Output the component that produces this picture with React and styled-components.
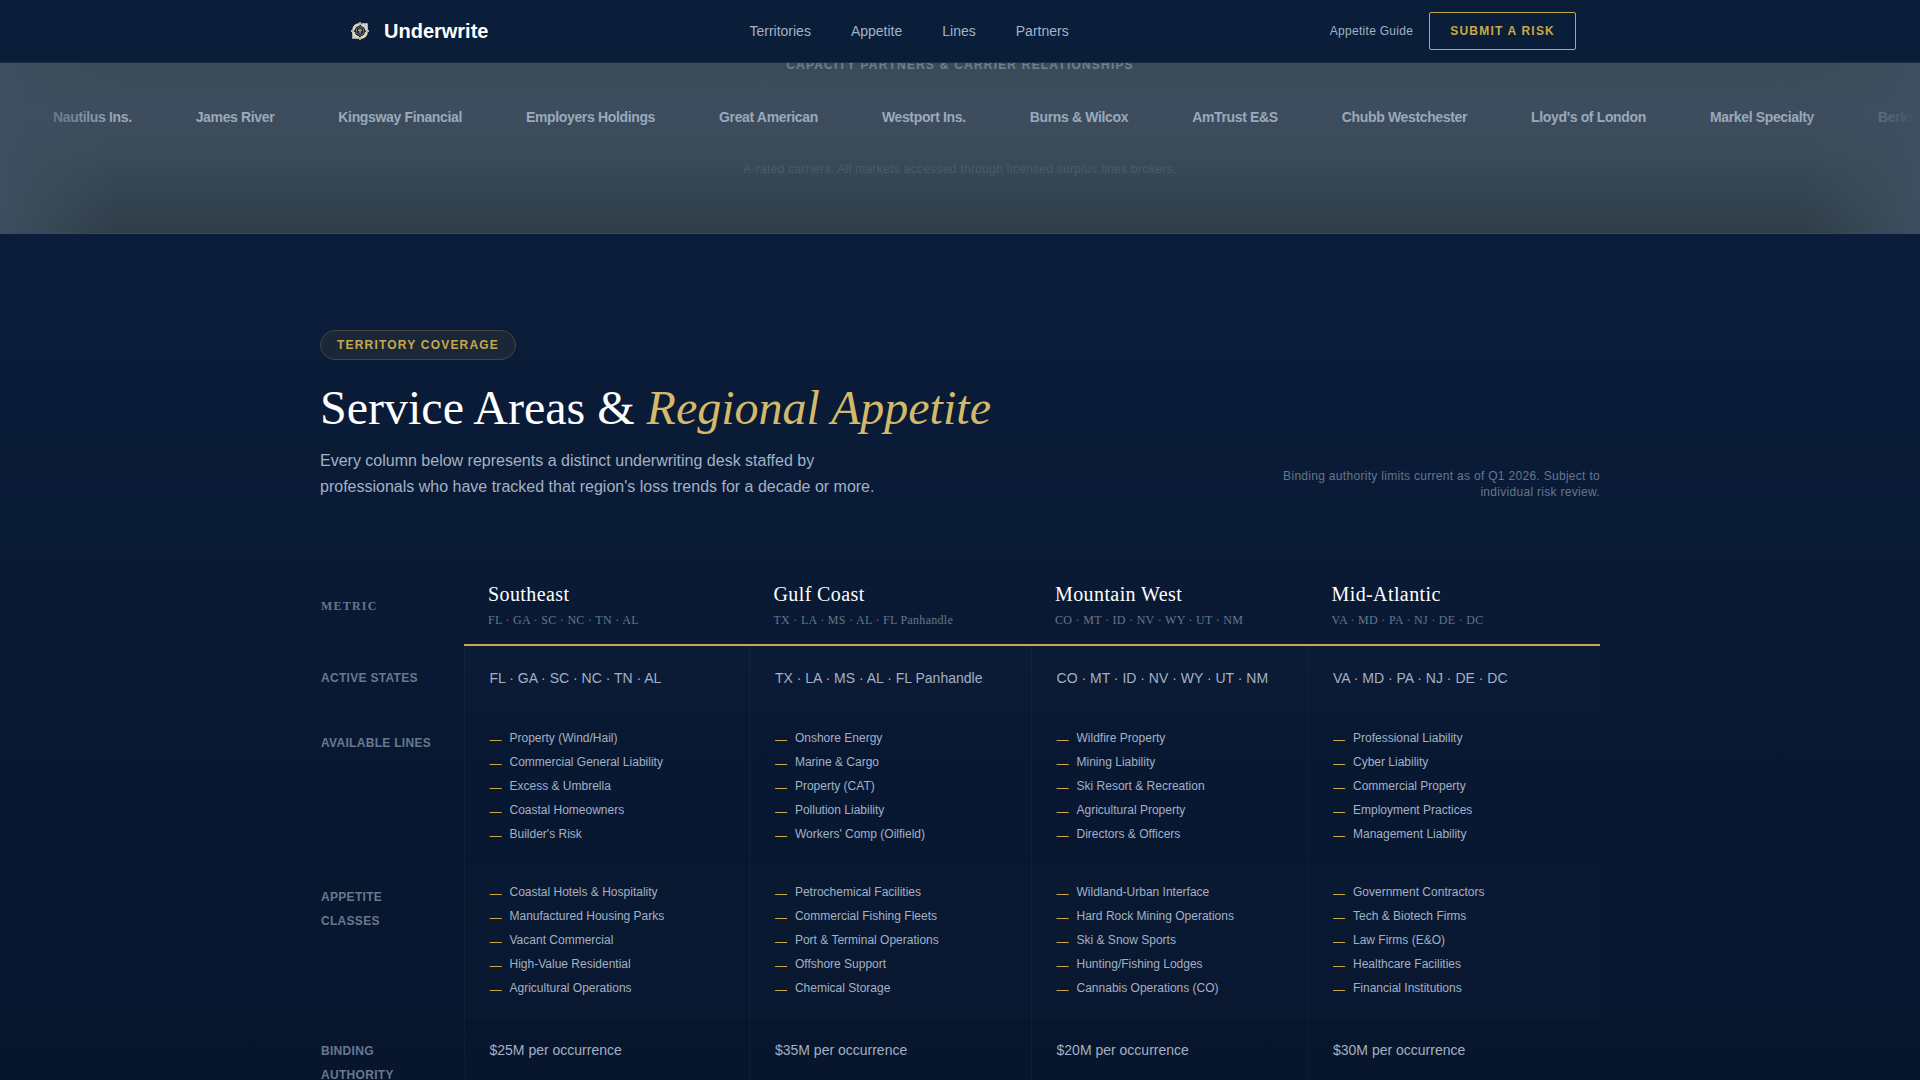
import React from "react";
import styled, { createGlobalStyle } from "styled-components";

const sans = `"Liberation Sans", Arial, sans-serif`;
const serif = `"Liberation Serif", "Times New Roman", serif`;

const GlobalStyle = createGlobalStyle`
  * {
    box-sizing: border-box;
  }
  body {
    margin: 0;
    background: #07152d;
    color: #a3b1c4;
    font-family: ${sans};
    overflow-x: hidden;
  }
`;

const Header = styled.header`
  position: fixed;
  top: 0;
  left: 0;
  right: 0;
  z-index: 10;
  background: #0a1d39;
  border-bottom: 1px solid #1b2e48;
`;

const HeaderInner = styled.div`
  display: flex;
  align-items: center;
  justify-content: space-between;
  max-width: 1280px;
  margin: 0 auto;
  padding: 12px 24px;
`;

const Brand = styled.a`
  display: flex;
  align-items: center;
  gap: 8px;
  color: #ffffff;
  font-size: 20px;
  font-weight: 700;
  line-height: 32px;
  text-decoration: none;
`;

const Nav = styled.nav`
  display: flex;
  gap: 40px;
`;

const NavLink = styled.a`
  color: #a3b3c7;
  font-size: 14px;
  line-height: 20px;
  text-decoration: none;

  &:hover {
    color: #ffffff;
  }
`;

const Actions = styled.div`
  display: flex;
  align-items: center;
  gap: 16px;
`;

const GuideLink = styled(NavLink)`
  font-size: 12px;
  letter-spacing: 0.025em;
`;

const SubmitButton = styled.button`
  padding: 0 20px;
  height: 38px;
  border: 1px solid #c9a84c;
  border-radius: 2px;
  background: transparent;
  color: #c9a84c;
  font-family: ${sans};
  font-size: 12px;
  font-weight: 700;
  letter-spacing: 0.1em;
  cursor: pointer;
`;

const Partners = styled.section`
  position: relative;
  padding: 57px 0 56px;
  background: linear-gradient(180deg, #35464f 0, #394b58 64px, #3d4d5e 112px, #3a4b5a 150px, #2e3d48 100%);
  border-bottom: 1px solid #3a4a57;
  text-align: center;
  overflow: hidden;

  &::before,
  &::after {
    content: "";
    position: absolute;
    top: 0;
    bottom: 0;
    width: 120px;
    z-index: 1;
  }
  &::before {
    left: 0;
    background: linear-gradient(90deg, #3e4e5f, rgba(62, 78, 95, 0));
  }
  &::after {
    right: 0;
    background: linear-gradient(270deg, #3e4e5f, rgba(62, 78, 95, 0));
  }
`;

const PartnersLabel = styled.p`
  margin: 0 0 32px;
  color: #6f7f92;
  font-size: 12px;
  font-weight: 700;
  line-height: 16px;
  letter-spacing: 0.1em;
`;

const Marquee = styled.ul`
  display: flex;
  gap: 64px;
  margin: 0;
  padding: 0 0 0 53px;
  list-style: none;
`;

const Carrier = styled.li`
  flex: none;
  color: #9aa9bb;
  font-size: 14px;
  font-weight: 700;
  line-height: 24px;
  letter-spacing: -0.025em;
`;

const PartnersNote = styled.p`
  margin: 32px 0 0;
  color: #4b5b6e;
  font-size: 12px;
  line-height: 16px;
  letter-spacing: 0.025em;
`;

const Territories = styled.section`
  padding: 96px 24px;
  background: linear-gradient(180deg, #0b1d3a 0, #07152d 850px);
`;

const Container = styled.div`
  max-width: 1280px;
  margin: 0 auto;
`;

const Badge = styled.span`
  display: inline-block;
  padding: 0 16px;
  border: 1px solid #45463f;
  border-radius: 15px;
  background: #1a2738;
  color: #c9a84c;
  font-size: 12px;
  font-weight: 700;
  line-height: 28px;
  letter-spacing: 0.1em;
  vertical-align: top;
`;

const Intro = styled.div`
  display: flex;
  align-items: flex-end;
  justify-content: space-between;
  margin: 20px 0 64px;
`;

const Title = styled.h2`
  margin: 0 0 12px;
  color: #ffffff;
  font-family: ${serif};
  font-size: 48px;
  font-weight: 400;
  line-height: 56px;

  em {
    color: #d4b96a;
  }
`;

const Lead = styled.p`
  max-width: 576px;
  margin: 0;
  font-size: 16px;
  line-height: 26px;
`;

const Note = styled.p`
  max-width: 320px;
  margin: 0;
  color: #66768c;
  font-size: 12px;
  line-height: 16px;
  letter-spacing: 0.025em;
  text-align: right;
`;

const Table = styled.table`
  width: 100%;
  table-layout: fixed;
  border-collapse: collapse;
  text-align: left;
`;

const Col = styled.col`
  width: ${(p) => p.$width};
`;

const MetricHead = styled.th`
  padding: 4px 0 0 1px;
  color: #66768c;
  font-family: ${serif};
  font-size: 12px;
  font-weight: 700;
  letter-spacing: 0.1em;
`;

const RegionHead = styled.th`
  padding: 16px 24px;
  border-bottom: 2px solid #c9a84c;
  font-family: ${serif};
  font-weight: 400;
`;

const RegionName = styled.div`
  margin-bottom: 4px;
  color: #ffffff;
  font-size: 20px;
  line-height: 28px;
  letter-spacing: 0.02em;
`;

const RegionStates = styled.div`
  color: #66768c;
  font-size: 12px;
  line-height: 16px;
  letter-spacing: 0.025em;
`;

const RowLabel = styled.th`
  padding: 21px 24px 19px 1px;
  color: #68788e;
  font-size: 12px;
  font-weight: 700;
  line-height: 24px;
  letter-spacing: 0.025em;
  vertical-align: top;
`;

const Cell = styled.td`
  padding: 20px 24px 20px 25px;
  border-left: 1px solid rgba(255, 255, 255, 0.03);
  background: ${(p) => (p.$shaded ? "rgba(255, 255, 255, 0.013)" : "transparent")};
  font-size: 14px;
  line-height: 24px;
  vertical-align: top;
`;

const List = styled.ul`
  display: grid;
  gap: 8px;
  margin: 0;
  padding: 0 0 2px;
  list-style: none;
`;

const Item = styled.li`
  display: flex;
  gap: 8px;
  font-size: 12px;
  line-height: 16px;

  &::before {
    content: "—";
    margin-top: 4px;
    color: #c9a84c;
    line-height: 12px;
  }
`;

const carriers = [
  "Nautilus Ins.",
  "James River",
  "Kingsway Financial",
  "Employers Holdings",
  "Great American",
  "Westport Ins.",
  "Burns & Wilcox",
  "AmTrust E&S",
  "Chubb Westchester",
  "Lloyd's of London",
  "Markel Specialty",
  "Berkshire",
];

const regions = [
  { name: "Southeast", states: "FL · GA · SC · NC · TN · AL" },
  { name: "Gulf Coast", states: "TX · LA · MS · AL · FL Panhandle" },
  { name: "Mountain West", states: "CO · MT · ID · NV · WY · UT · NM" },
  { name: "Mid-Atlantic", states: "VA · MD · PA · NJ · DE · DC" },
];

const rows = [
  { label: "ACTIVE STATES", cells: regions.map((r) => r.states) },
  {
    label: "AVAILABLE LINES",
    cells: [
      ["Property (Wind/Hail)", "Commercial General Liability", "Excess & Umbrella", "Coastal Homeowners", "Builder's Risk"],
      ["Onshore Energy", "Marine & Cargo", "Property (CAT)", "Pollution Liability", "Workers' Comp (Oilfield)"],
      ["Wildfire Property", "Mining Liability", "Ski Resort & Recreation", "Agricultural Property", "Directors & Officers"],
      ["Professional Liability", "Cyber Liability", "Commercial Property", "Employment Practices", "Management Liability"],
    ],
  },
  {
    label: "APPETITE CLASSES",
    cells: [
      ["Coastal Hotels & Hospitality", "Manufactured Housing Parks", "Vacant Commercial", "High-Value Residential", "Agricultural Operations"],
      ["Petrochemical Facilities", "Commercial Fishing Fleets", "Port & Terminal Operations", "Offshore Support", "Chemical Storage"],
      ["Wildland-Urban Interface", "Hard Rock Mining Operations", "Ski & Snow Sports", "Hunting/Fishing Lodges", "Cannabis Operations (CO)"],
      ["Government Contractors", "Tech & Biotech Firms", "Law Firms (E&O)", "Healthcare Facilities", "Financial Institutions"],
    ],
  },
  {
    label: "BINDING AUTHORITY",
    cells: ["$25M per occurrence", "$35M per occurrence", "$20M per occurrence", "$30M per occurrence"],
  },
];

const Logo = () => (
  <svg width="32" height="32" viewBox="0 0 32 32" fill="none" aria-hidden="true">
    <circle cx="16" cy="16" r="6.6" stroke="#e6d6ab" strokeWidth="2.8" strokeDasharray="8.4 1.97" strokeDashoffset="-1" />
    <path d="M18 9.2h4.8V14M14 22.8H9.2V18" stroke="#c3d0de" strokeWidth="2" />
    <path d="M16 7v3M16 22v3M7 16h3M22 16h3" stroke="#f5ecd2" strokeWidth="1.4" />
    <path d="M16 11.6l3.6 2v4.6L16 20.4l-3.6-2.2v-4.6z" fill="#172c3d" stroke="#77818a" strokeWidth="0.8" />
    <path d="M16 13.4v5M14 15.4h4" stroke="#bca660" strokeWidth="1.3" />
  </svg>
);

const CellContent = ({ value }) =>
  Array.isArray(value) ? (
    <List>
      {value.map((item) => (
        <Item key={item}>{item}</Item>
      ))}
    </List>
  ) : (
    value
  );

const App = () => {
  return (
    <>
      <GlobalStyle />
      <Header>
        <HeaderInner>
          <Brand href="#">
            <Logo />
            Underwrite
          </Brand>
          <Nav>
            <NavLink href="#territories">Territories</NavLink>
            <NavLink href="#appetite">Appetite</NavLink>
            <NavLink href="#lines">Lines</NavLink>
            <NavLink href="#partners">Partners</NavLink>
          </Nav>
          <Actions>
            <GuideLink href="#guide">Appetite Guide</GuideLink>
            <SubmitButton type="button">SUBMIT A RISK</SubmitButton>
          </Actions>
        </HeaderInner>
      </Header>

      <Partners id="partners">
        <PartnersLabel>CAPACITY PARTNERS &amp; CARRIER RELATIONSHIPS</PartnersLabel>
        <Marquee>
          {carriers.map((name) => (
            <Carrier key={name}>{name}</Carrier>
          ))}
        </Marquee>
        <PartnersNote>A-rated carriers. All markets accessed through licensed surplus lines brokers.</PartnersNote>
      </Partners>

      <Territories id="territories">
        <Container>
          <Badge>TERRITORY COVERAGE</Badge>
          <Intro>
            <div>
              <Title>
                Service Areas &amp; <em>Regional Appetite</em>
              </Title>
              <Lead>
                Every column below represents a distinct underwriting desk staffed by professionals who have tracked
                that region's loss trends for a decade or more.
              </Lead>
            </div>
            <Note>Binding authority limits current as of Q1 2026. Subject to individual risk review.</Note>
          </Intro>

          <Table>
            <colgroup>
              <Col $width="144px" />
              <Col $width="22.3%" />
              <Col $width="22%" />
              <Col $width="21.6%" />
              <Col />
            </colgroup>
            <thead>
              <tr>
                <MetricHead scope="col">METRIC</MetricHead>
                {regions.map((region) => (
                  <RegionHead key={region.name} scope="col">
                    <RegionName>{region.name}</RegionName>
                    <RegionStates>{region.states}</RegionStates>
                  </RegionHead>
                ))}
              </tr>
            </thead>
            <tbody>
              {rows.map((row, i) => (
                <tr key={row.label}>
                  <RowLabel scope="row">{row.label}</RowLabel>
                  {row.cells.map((value, j) => (
                    <Cell key={j} $shaded={i % 2 === 0}>
                      <CellContent value={value} />
                    </Cell>
                  ))}
                </tr>
              ))}
            </tbody>
          </Table>
        </Container>
      </Territories>
    </>
  );
};

export default App;
